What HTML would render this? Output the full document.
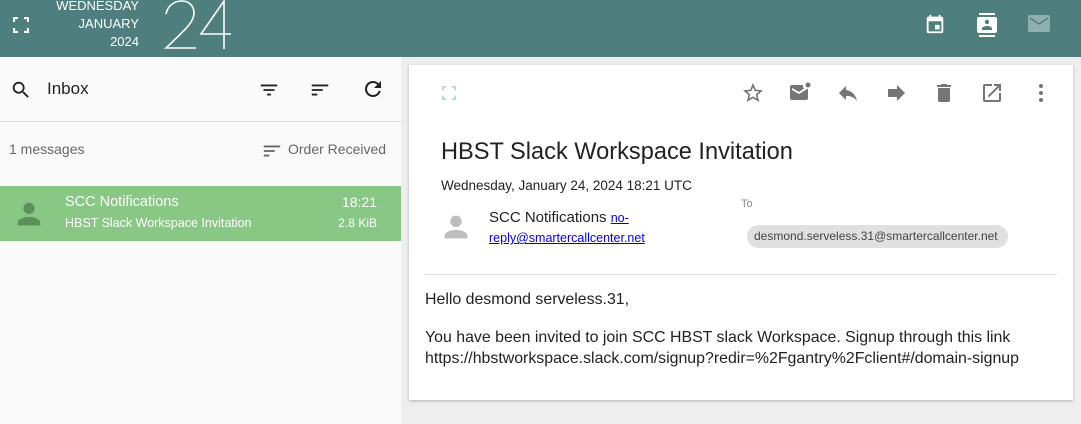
<!DOCTYPE html>
<html><head><style>
*{margin:0;padding:0;box-sizing:border-box}
body{width:1081px;height:424px;overflow:hidden;font-family:"Liberation Sans","DejaVu Sans",sans-serif;background:#eeeeee;position:relative}
.abs{position:absolute}
#hdr{left:0;top:0;width:1081px;height:57px;background:#4e7f7e}
#left{left:0;top:57px;width:401px;height:367px;background:#fafafa}
#card{left:409px;top:65px;width:664px;height:335px;background:#fff;box-shadow:0 1px 3px rgba(0,0,0,.25)}
.t{position:absolute;white-space:nowrap}
</style></head><body>
<div id="hdr" class="abs">
 <svg class="abs" style="left:13px;top:17px" width="16" height="16" viewBox="0 0 16 16" fill="none" stroke="#fff" stroke-width="2.2"><path d="M1 5V1h4M11 1h4v4M15 11v4h-4M5 15H1v-4"/></svg>
 <div class="t" style="right:942px;top:-3px;color:#fff;font-size:13px;text-align:right;line-height:18px">WEDNESDAY<br>JANUARY<br>2024</div>
 <svg class="abs" style="left:164px;top:0" width="70" height="52" viewBox="0 0 70 52" fill="none" stroke="#fff" stroke-width="1.6"><path d="M2 14C4 4 12 1 18 1c7 0 12 5 12 12 0 9-8 16-28 35h30"/><path d="M60 49V1L37 34h30"/></svg>
 <svg class="abs" style="left:924px;top:13px" width="22" height="22" viewBox="0 0 24 24" fill="#fff"><path d="M19 4h-1V2h-2v2H8V2H6v2H5a2 2 0 0 0-2 2v14a2 2 0 0 0 2 2h14a2 2 0 0 0 2-2V6a2 2 0 0 0-2-2zm0 16H5V9h14zM12 13h5v5h-5z"/></svg>
 <svg class="abs" style="left:975px;top:12px" width="24" height="26" viewBox="0 0 24 24" fill="#fff"><path d="M20 0H4v2h16zM4 24h16v-2H4zM20 4H4a2 2 0 0 0-2 2v12a2 2 0 0 0 2 2h16a2 2 0 0 0 2-2V6a2 2 0 0 0-2-2zm-8 2.8a2.2 2.2 0 1 1 0 4.4 2.2 2.2 0 0 1 0-4.4zM17 17H7v-1.5c0-1.700 3.3-2.5 5-2.5s5 .8 5 2.5z"/></svg>
 <svg class="abs" style="left:1028px;top:14px" width="22" height="20" viewBox="0 0 22 20"><rect x="0" y="1" width="22" height="17" rx="2" fill="#8fb0ae"/><path d="M2 4l9 6 9-6" fill="none" stroke="#4e7f7e" stroke-width="1.5"/></svg>
</div>
<div id="left" class="abs">
 <svg class="abs" style="left:10px;top:22px" width="22" height="22" viewBox="0 0 24 24" fill="#222"><path d="M15.5 14h-.8l-.3-.3A6.5 6.5 0 1 0 9.5 16a6.5 6.5 0 0 0 4.2-1.6l.3.3v.8l5 5 1.5-1.5zm-6 0A4.5 4.5 0 1 1 14 9.5 4.5 4.5 0 0 1 9.5 14z"/></svg>
 <div class="t" style="left:47px;top:22px;font-size:17px;color:#222">Inbox</div>
 <svg class="abs" style="left:258px;top:22px" width="22" height="22" viewBox="0 0 24 24" fill="#222"><path d="M10 18h4v-2h-4zM3 6v2h18V6zm3 7h12v-2H6z"/></svg>
 <svg class="abs" style="left:309px;top:22px" width="22" height="22" viewBox="0 0 24 24" fill="#222"><path d="M3 18h6v-2H3zM3 6v2h18V6zm0 7h12v-2H3z"/></svg>
 <svg class="abs" style="left:361px;top:20px" width="24" height="24" viewBox="0 0 24 24" fill="#222"><path d="M17.65 6.35A7.960 7.960 0 0 0 12 4a8 8 0 1 0 7.73 10h-2.08A6 6 0 1 1 12 6c1.66 0 3.140.69 4.220 1.780L13 11h7V4z"/></svg>
 <div class="abs" style="left:0;top:64px;width:401px;height:1px;background:#ddd"></div>
 <div class="t" style="left:9px;top:84px;font-size:14px;color:#666">1 messages</div>
 <svg class="abs" style="left:261px;top:83px" width="22" height="22" viewBox="0 0 24 24" fill="#666"><path d="M3 18h6v-2H3zM3 6v2h18V6zm0 7h12v-2H3z"/></svg>
 <div class="t" style="left:288px;top:84px;font-size:14px;color:#666">Order Received</div>
 <div class="abs" style="left:0;top:129px;width:401px;height:55px;background:#88c784">
  <svg class="abs" style="left:12px;top:11px" width="34" height="34" viewBox="0 0 24 24" fill="#5d8f5a"><path d="M12 12a4 4 0 1 0 0-8 4 4 0 0 0 0 8zm0 2c-2.700 0-8 1.300-8 4v2h16v-2c0-2.700-5.300-4-8-4z"/></svg>
  <div class="t" style="left:65px;top:8px;font-size:14.5px;color:#fff">SCC Notifications</div>
  <div class="t" style="left:65px;top:30px;font-size:12.5px;color:#fff">HBST Slack Workspace Invitation</div>
  <div class="t" style="right:24px;top:8px;font-size:14px;color:#fff">18:21</div>
  <div class="t" style="right:24px;top:30px;font-size:12px;color:#fff">2.8 KiB</div>
 </div>
</div>
<div id="card" class="abs">
 <svg class="abs" style="left:33px;top:21px" width="14" height="14" viewBox="0 0 16 16" fill="none" stroke="#9cc" stroke-width="1.5"><path d="M1 5V1h4M11 1h4v4M15 11v4h-4M5 15H1v-4"/></svg>
 <svg class="abs" style="left:332px;top:16px" width="24" height="24" viewBox="0 0 24 24" fill="#757575"><path d="M22 9.24l-7.19-.62L12 2 9.19 8.63 2 9.24l5.46 4.73L5.82 21 12 17.27 18.18 21l-1.63-7.03zM12 15.4l-3.76 2.27 1-4.28-3.32-2.88 4.38-.38L12 6.1l1.71 4.04 4.38.38-3.32 2.88 1 4.28z"/></svg>
 <svg class="abs" style="left:379px;top:15px" width="24" height="24" viewBox="0 0 24 24" fill="#757575"><path d="M20 8.5V18a2 2 0 0 1-2 2H4a2 2 0 0 1-2-2V7a2 2 0 0 1 2-2h11a4 4 0 0 0 1 3.5L11 12 4 8v2l7 4 6.5-4z"/><circle cx="20" cy="5" r="2.5"/></svg>
 <svg class="abs" style="left:427px;top:16px" width="24" height="24" viewBox="0 0 24 24" fill="#757575"><path d="M10 9V5l-7 7 7 7v-4.1c5 0 8.5 1.6 11 5.1-1-5-4-10-11-11z"/></svg>
 <svg class="abs" style="left:475px;top:16px" width="24" height="24" viewBox="0 0 24 24" fill="#757575"><path d="M13 8V4l8 8-8 8v-4H4V8z"/></svg>
 <svg class="abs" style="left:523px;top:16px" width="24" height="24" viewBox="0 0 24 24" fill="#757575"><path d="M6 19a2 2 0 0 0 2 2h8a2 2 0 0 0 2-2V7H6zM19 4h-3.5l-1-1h-5l-1 1H5v2h14z"/></svg>
 <svg class="abs" style="left:571px;top:16px" width="24" height="24" viewBox="0 0 24 24" fill="#757575"><path d="M19 19H5V5h7V3H5a2 2 0 0 0-2 2v14a2 2 0 0 0 2 2h14a2 2 0 0 0 2-2v-7h-2zM14 3v2h3.59l-9.83 9.83 1.41 1.41L19 6.41V10h2V3z"/></svg>
 <svg class="abs" style="left:620px;top:16px" width="24" height="24" viewBox="0 0 24 24" fill="#757575"><circle cx="12" cy="5" r="2"/><circle cx="12" cy="12" r="2"/><circle cx="12" cy="19" r="2"/></svg>
 <div class="t" style="left:32px;top:74px;font-size:23.6px;color:#222">HBST Slack Workspace Invitation</div>
 <div class="t" style="left:32px;top:113px;font-size:13.5px;color:#222">Wednesday, January 24, 2024 18:21 UTC</div>
 <svg class="abs" style="left:30px;top:145px" width="34" height="34" viewBox="0 0 24 24" fill="#bdbdbd"><path d="M12 12a4 4 0 1 0 0-8 4 4 0 0 0 0 8zm0 2c-2.700 0-8 1.300-8 4v2h16v-2c0-2.700-5.300-4-8-4z"/></svg>
 <div class="t" style="left:80px;top:144px;font-size:15px;color:#222">SCC Notifications <a style="color:#00e;font-size:12.5px;text-decoration:underline">no-</a></div>
 <div class="t" style="left:80px;top:166px;font-size:12.5px"><a style="color:#00e;text-decoration:underline">reply@smartercallcenter.net</a></div>
 <div class="t" style="left:332px;top:133px;font-size:11px;color:#888">To</div>
 <div class="abs" style="left:338px;top:160px;width:261px;height:23px;border-radius:12px;background:#e0e0e0"></div>
 <div class="t" style="left:345px;top:164px;font-size:12px;color:#444">desmond.serveless.31@smartercallcenter.net</div>
 <div class="abs" style="left:16px;top:209px;width:632px;height:1px;background:#ddd"></div>
 <div class="t" style="left:16px;top:226px;font-size:15.9px;color:#222">Hello desmond serveless.31,</div>
 <div class="t" style="left:16px;top:262px;font-size:15.9px;color:#222;line-height:21px">You have been invited to join SCC HBST slack Workspace. Signup through this link<br>https://hbstworkspace.slack.com/signup?redir=%2Fgantry%2Fclient#/domain-signup</div>
</div>
</body></html>
